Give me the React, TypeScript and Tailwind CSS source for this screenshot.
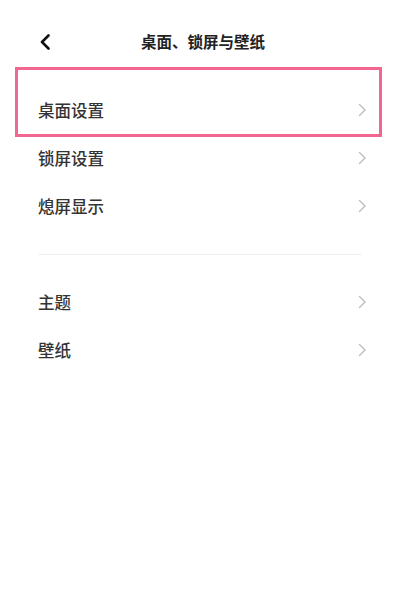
import React from 'react';

const font = { fontFamily: '"Noto Sans CJK SC", "Noto Sans", sans-serif' };

function Chevron() {
  return (
    <svg width="9" height="14" viewBox="0 0 9 14" fill="none" className="shrink-0">
      <path d="M1.5 1.5L7 7L1.5 12.5" stroke="#bdbdbd" strokeWidth="1.4" strokeLinecap="round" strokeLinejoin="round" />
    </svg>
  );
}

function Row({ label }: { label: string }) {
  return (
    <div className="flex h-[48px] items-center justify-between pl-[38px] pr-[33px]">
      <span className="text-[16.5px] font-medium leading-none text-[#333333]">{label}</span>
      <Chevron />
    </div>
  );
}

export default function App() {
  return (
    <div className="h-[598px] w-[400px] bg-white" style={font}>
      {/* header */}
      <div className="relative flex h-[84px] items-center justify-center">
        <svg width="12" height="16" viewBox="0 0 12 16" fill="none" className="absolute left-[39px] top-[34px]">
          <path d="M9.5 1.5L3 8L9.5 14.5" stroke="#111111" strokeWidth="2.6" strokeLinecap="round" strokeLinejoin="round" />
        </svg>
        <span className="pl-[6px] text-[15.5px] font-bold leading-none text-[#222222]">桌面、锁屏与壁纸</span>
      </div>

      <div className="relative pt-[2px]">
        <Row label="桌面设置" />
        <Row label="锁屏设置" />
        <Row label="熄屏显示" />

        <div className="flex h-[48px] items-center px-[38px]">
          <div className="h-px w-full bg-[#f1f1f1]" />
        </div>

        <Row label="主题" />
        <Row label="壁纸" />

        {/* highlight overlay */}
        <div className="pointer-events-none absolute left-[15px] top-[-17px] h-[70px] w-[367px] border-[3px] border-[#f2668f]" />
      </div>
    </div>
  );
}
